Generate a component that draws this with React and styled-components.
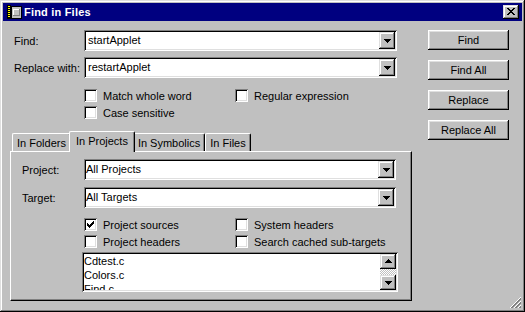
import React from 'react';
import styled, { createGlobalStyle } from 'styled-components';

const Global = createGlobalStyle`
  html, body { margin: 0; padding: 0; background: #c0c0c0; }
  body { font-family: "Liberation Sans", Arial, sans-serif; font-size: 11px; color: #000; }
  * { box-sizing: border-box; }
`;

const raised = `box-shadow: inset -1px -1px #000, inset 1px 1px #fff, inset -2px -2px #808080, inset 2px 2px #dfdfdf;`;
const raisedSmall = `box-shadow: inset -1px -1px #000, inset 1px 1px #dfdfdf, inset -2px -2px #808080, inset 2px 2px #fff;`;
const sunken = `box-shadow: inset 1px 1px #808080, inset -1px -1px #fff, inset 2px 2px #000, inset -2px -2px #dfdfdf;`;

const Window = styled.div`
  position: relative;
  width: 525px;
  height: 312px;
  background: #c0c0c0;
  padding: 3px;
  box-shadow: inset -1px -1px #000, inset 1px 1px #dfdfdf, inset -2px -2px #808080, inset 2px 2px #fff;
  display: flex;
  flex-direction: column;
`;

const TitleBar = styled.div`
  height: 18px;
  background: #000080;
  display: flex;
  align-items: center;
  padding: 0 3px 0 4px;
  color: #fff;
`;

const TitleText = styled.div`
  flex: 1;
  font-weight: bold;
  font-size: 11px;
  margin-left: 1px;
  letter-spacing: 0.2px;
`;

const CloseButton = styled.div`
  width: 16px;
  height: 14px;
  background: #c0c0c0;
  ${raisedSmall}
  display: flex;
  align-items: center;
  justify-content: center;
  padding-bottom: 1px;
`;

const Content = styled.div`
  flex: 1;
  display: flex;
  padding: 9px 13px 0 7px;
`;

const LeftColumn = styled.div`
  width: 402px;
  display: flex;
  flex-direction: column;
`;

const FieldGrid = styled.div`
  display: grid;
  grid-template-columns: ${p => p.$label}px ${p => p.$field}px;
  grid-auto-rows: 21px;
  row-gap: ${p => p.$gap}px;
  margin-left: ${p => p.$indent}px;
  align-items: center;
`;

const Label = styled.div`
  white-space: nowrap;
`;

const ComboBox = styled.div`
  display: flex;
  height: 21px;
  background: #fff;
  padding: 2px;
  ${sunken}
`;

const ComboText = styled.div`
  flex: 1;
  line-height: 17px;
  padding-left: ${p => p.$pad}px;
  white-space: nowrap;
  overflow: hidden;
`;

const DropButton = styled.div`
  width: 16px;
  height: ${p => (p.$short ? 15 : 17)}px;
  background: #c0c0c0;
  ${raisedSmall}
  display: flex;
  align-items: center;
  justify-content: center;
  padding: ${p => (p.$up ? '0 0 1px' : '1px 0 0')};
`;

const Options = styled.div`
  display: grid;
  grid-template-columns: 151px auto;
  grid-auto-rows: 13px;
  row-gap: 4px;
  margin-left: ${p => p.$indent}px;
  margin-top: ${p => p.$top}px;
`;

const OptionRow = styled.label`
  display: flex;
  align-items: center;
  gap: 6px;
  height: 13px;
  white-space: nowrap;
`;

const CheckBox = styled.span`
  width: 13px;
  height: 13px;
  background: #fff;
  ${sunken}
  display: flex;
  align-items: center;
  justify-content: center;
`;

const TabStrip = styled.div`
  display: flex;
  align-items: flex-end;
  height: 20px;
  padding-left: 2px;
  margin-top: 12px;
`;

const Tab = styled.div`
  position: relative;
  z-index: ${p => (p.$active ? 2 : 1)};
  height: ${p => (p.$active ? 21 : 18)}px;
  margin: 0 ${p => (p.$active ? -2 : 0)}px ${p => (p.$active ? -1 : 0)}px;
  padding: ${p => (p.$active ? '0 6px 2px' : '0 4px')};
  background: #c0c0c0;
  border-top: 1px solid #fff;
  border-left: 1px solid #fff;
  border-right: 1px solid #000;
  border-radius: 2px 2px 0 0;
  box-shadow: inset -1px 0 #808080;
  display: flex;
  align-items: center;
  white-space: nowrap;
`;

const Panel = styled.div`
  height: 150px;
  border: 1px solid;
  border-color: #fff #000 #000 #fff;
  box-shadow: inset -1px -1px #808080;
  padding: 7px 0 0 11px;
  overflow: hidden;
  display: flex;
  flex-direction: column;
`;

const ListBox = styled.div`
  margin-left: 60px;
  margin-top: 4px;
  width: 316px;
  height: 40px;
  background: #fff;
  padding: 2px;
  ${sunken}
  display: flex;
`;

const ListItems = styled.div`
  flex: 1;
  overflow: hidden;
  line-height: 14px;
  padding-left: 0;
`;

const ScrollBar = styled.div`
  width: 16px;
  display: flex;
  flex-direction: column;
`;

const ScrollTrack = styled.div`
  flex: 1;
  background: repeating-conic-gradient(#fff 0 25%, #c0c0c0 0 50%) 0 0 / 2px 2px;
`;

const ButtonColumn = styled.div`
  margin-left: 16px;
  width: 81px;
  display: flex;
  flex-direction: column;
  gap: 10px;
`;

const PushButton = styled.div`
  height: 20px;
  background: #c0c0c0;
  ${raised}
  display: flex;
  align-items: center;
  justify-content: center;
  white-space: nowrap;
`;

const Grip = styled.div`
  position: absolute;
  right: 3px;
  bottom: 3px;
  width: 12px;
  height: 12px;
`;

const Pixels = ({ rows, color = '#000' }) => {
  const w = rows[0].length;
  const h = rows.length;
  const rects = [];
  rows.forEach((r, y) => {
    [...r].forEach((c, x) => {
      if (c === 'X') rects.push(<rect key={`${x}-${y}`} x={x} y={y} width="1" height="1" fill={color} />);
    });
  });
  return (
    <svg width={w} height={h} viewBox={`0 0 ${w} ${h}`} shapeRendering="crispEdges">
      {rects}
    </svg>
  );
};

const DOWN = ['XXXXXXX', '.XXXXX.', '..XXX..', '...X...'];
const UP = ['...X...', '..XXX..', '.XXXXX.', 'XXXXXXX'];
const CLOSE = ['XX....XX', '.XX..XX.', '..XXXX..', '...XX...', '..XXXX..', '.XX..XX.', 'XX....XX'];
const CHECK = ['......X', '.....XX', 'X...XXX', 'XX.XXX.', 'XXXXX..', '.XXX...', '..X....'];

const AppIcon = () => (
  <svg width="16" height="16" viewBox="0 0 16 16" shapeRendering="crispEdges">
    <rect x="0" y="1" width="4" height="14" fill="#000" />
    {[2, 4, 6, 8, 10, 12].map(y => (
      <rect key={y} x="1" y={y} width="2" height="1" fill="#ffff00" />
    ))}
    <rect x="4" y="2" width="11" height="13" fill="#000" />
    <rect x="5" y="3" width="9" height="11" fill="#c0c0c0" />
    <rect x="6" y="5" width="7" height="7" fill="#808080" />
    <rect x="6" y="5" width="6" height="6" fill="#fff" />
    <rect x="7" y="6" width="5" height="5" fill="#c0c0c0" />
  </svg>
);

const Combo = ({ value, pad = 2 }) => (
  <ComboBox>
    <ComboText $pad={pad}>{value}</ComboText>
    <DropButton>
      <Pixels rows={DOWN} />
    </DropButton>
  </ComboBox>
);

const Option = ({ label, checked }) => (
  <OptionRow>
    <CheckBox>{checked && <Pixels rows={CHECK} />}</CheckBox>
    {label}
  </OptionRow>
);

export default function App() {
  return (
    <>
      <Global />
      <Window>
        <TitleBar>
          <AppIcon />
          <TitleText>Find in Files</TitleText>
          <CloseButton>
            <Pixels rows={CLOSE} />
          </CloseButton>
        </TitleBar>
        <Content>
          <LeftColumn>
            <FieldGrid $label={70} $field={313} $gap={6} $indent={4}>
              <Label>Find:</Label>
              <Combo value="startApplet" />
              <Label>Replace with:</Label>
              <Combo value="restartApplet" />
            </FieldGrid>
            <Options $indent={74} $top={11}>
              <Option label="Match whole word" />
              <Option label="Regular expression" />
              <Option label="Case sensitive" />
            </Options>
            <TabStrip>
              <Tab>In Folders</Tab>
              <Tab $active>In Projects</Tab>
              <Tab>In Symbolics</Tab>
              <Tab>In Files</Tab>
            </TabStrip>
            <Panel>
              <FieldGrid $label={62} $field={312} $gap={7} $indent={0}>
                <Label>Project:</Label>
                <Combo value="All Projects" pad={0} />
                <Label>Target:</Label>
                <Combo value="All Targets" pad={0} />
              </FieldGrid>
              <Options $indent={62} $top={10}>
                <Option label="Project sources" checked />
                <Option label="System headers" />
                <Option label="Project headers" />
                <Option label="Search cached sub-targets" />
              </Options>
              <ListBox>
                <ListItems>
                  <div>Cdtest.c</div>
                  <div>Colors.c</div>
                  <div>Find.c</div>
                </ListItems>
                <ScrollBar>
                  <DropButton $up $short>
                    <Pixels rows={UP} />
                  </DropButton>
                  <ScrollTrack />
                  <DropButton $short>
                    <Pixels rows={DOWN} />
                  </DropButton>
                </ScrollBar>
              </ListBox>
            </Panel>
          </LeftColumn>
          <ButtonColumn>
            <PushButton>Find</PushButton>
            <PushButton>Find All</PushButton>
            <PushButton>Replace</PushButton>
            <PushButton>Replace All</PushButton>
          </ButtonColumn>
        </Content>
        <Grip>
          <svg width="12" height="12" viewBox="0 0 12 12" shapeRendering="crispEdges">
            {[0, 4, 8].map(o => (
              <g key={o}>
                <line x1={11} y1={o} x2={o} y2={11} stroke="#fff" strokeWidth="1" />
                <line x1={11} y1={o + 1} x2={o + 1} y2={11} stroke="#808080" strokeWidth="1" />
                <line x1={11} y1={o + 2} x2={o + 2} y2={11} stroke="#808080" strokeWidth="1" />
              </g>
            ))}
          </svg>
        </Grip>
      </Window>
    </>
  );
}
